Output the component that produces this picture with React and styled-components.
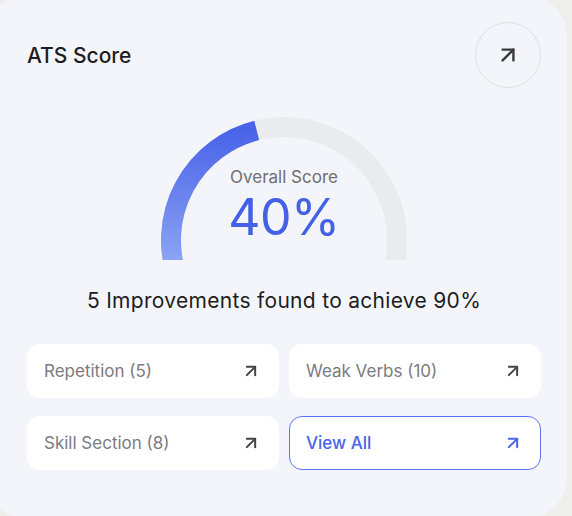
import React from "react";
import styled, { createGlobalStyle } from "styled-components";
import { ArrowUpRight } from "lucide-react";

const GlobalStyle = createGlobalStyle`
  html, body {
    margin: 0;
    padding: 0;
    background: #eeefea;
    overflow: hidden;
  }
  body {
    font-family: Inter, "Noto Sans", sans-serif;
  }
`;

const Card = styled.div`
  box-sizing: border-box;
  width: 581px;
  height: 522px;
  margin: -4px 0 0 -14px;
  padding: 26px 26px 0 41px;
  background: #f4f5fa;
  border-radius: 40px;
  display: flex;
  flex-direction: column;
`;

const Header = styled.div`
  display: flex;
  align-items: center;
  justify-content: space-between;
`;

const Title = styled.h2`
  margin: 0;
  font-size: 21px;
  font-weight: 500;
  color: #1d1d1f;
`;

const RoundButton = styled.button`
  width: 66px;
  height: 66px;
  border-radius: 50%;
  border: 1.5px solid #dfdfe2;
  background: transparent;
  display: flex;
  align-items: center;
  justify-content: center;
  color: #3a3a3c;
  padding: 0;
`;

const Gauge = styled.div`
  display: grid;
  justify-items: center;
  margin-top: 29px;
  height: 143px;

  & > * {
    grid-area: 1 / 1;
  }
`;

const GaugeText = styled.div`
  display: flex;
  flex-direction: column;
  align-items: center;
  padding-top: 50px;
`;

const Label = styled.div`
  font-size: 17px;
  line-height: 21px;
  color: #6e6e73;
`;

const Percent = styled.div`
  margin-top: 7px;
  font-size: 50px;
  line-height: 44px;
  color: #4461e6;
  font-weight: 400;
  letter-spacing: -0.5px;
`;

const Summary = styled.p`
  margin: 28px 0 0;
  text-align: center;
  font-size: 21px;
  line-height: 26px;
  color: #1d1d1f;
  font-weight: 400;
  letter-spacing: 0.3px;
`;

const Grid = styled.div`
  display: grid;
  grid-template-columns: 1fr 1fr;
  column-gap: 10px;
  row-gap: 18px;
  margin-top: 30px;
`;

const Chip = styled.button`
  box-sizing: border-box;
  height: 54px;
  display: flex;
  align-items: center;
  justify-content: space-between;
  padding: 0 17px 0 16px;
  background: #ffffff;
  border-radius: 13px;
  border: 1.5px solid ${(p) => (p.$primary ? "#5b76f0" : "transparent")};
  font-family: inherit;
  font-size: 17px;
  font-weight: ${(p) => (p.$primary ? 500 : 400)};
  color: ${(p) => (p.$primary ? "#4864e8" : "#7b7b80")};
  text-align: left;
`;

const ChipIcon = styled.span`
  display: flex;
  color: ${(p) => (p.$primary ? "#4864e8" : "#444448")};
`;

const items = [
  { label: "Repetition (5)" },
  { label: "Weak Verbs (10)" },
  { label: "Skill Section (8)" },
  { label: "View All", primary: true },
];

function ScoreGauge() {
  return (
    <Gauge>
      <svg width="246" height="143" viewBox="0 0 246 143">
        <defs>
          <linearGradient id="blueArc" x1="0" y1="1" x2="0" y2="0">
            <stop offset="0" stopColor="#94adf4" />
            <stop offset="1" stopColor="#4a63e9" />
          </linearGradient>
        </defs>
        <path
          d="M 16.8 161.6 A 113 113 0 1 1 229.2 161.6"
          fill="none"
          stroke="#e9ebec"
          strokeWidth="20"
        />
        <path
          d="M 16.8 161.6 A 113 113 0 0 1 95.7 13.4"
          fill="none"
          stroke="url(#blueArc)"
          strokeWidth="20"
        />
      </svg>
      <GaugeText>
        <Label>Overall Score</Label>
        <Percent>40%</Percent>
      </GaugeText>
    </Gauge>
  );
}

export default function App() {
  return (
    <>
      <GlobalStyle />
      <Card>
        <Header>
          <Title>ATS Score</Title>
          <RoundButton aria-label="Open">
            <ArrowUpRight size={26} strokeWidth={2.2} />
          </RoundButton>
        </Header>
        <ScoreGauge />
        <Summary>5 Improvements found to achieve 90%</Summary>
        <Grid>
          {items.map((it) => (
            <Chip key={it.label} $primary={it.primary}>
              {it.label}
              <ChipIcon $primary={it.primary}>
                <ArrowUpRight size={20} strokeWidth={2.4} />
              </ChipIcon>
            </Chip>
          ))}
        </Grid>
      </Card>
    </>
  );
}
